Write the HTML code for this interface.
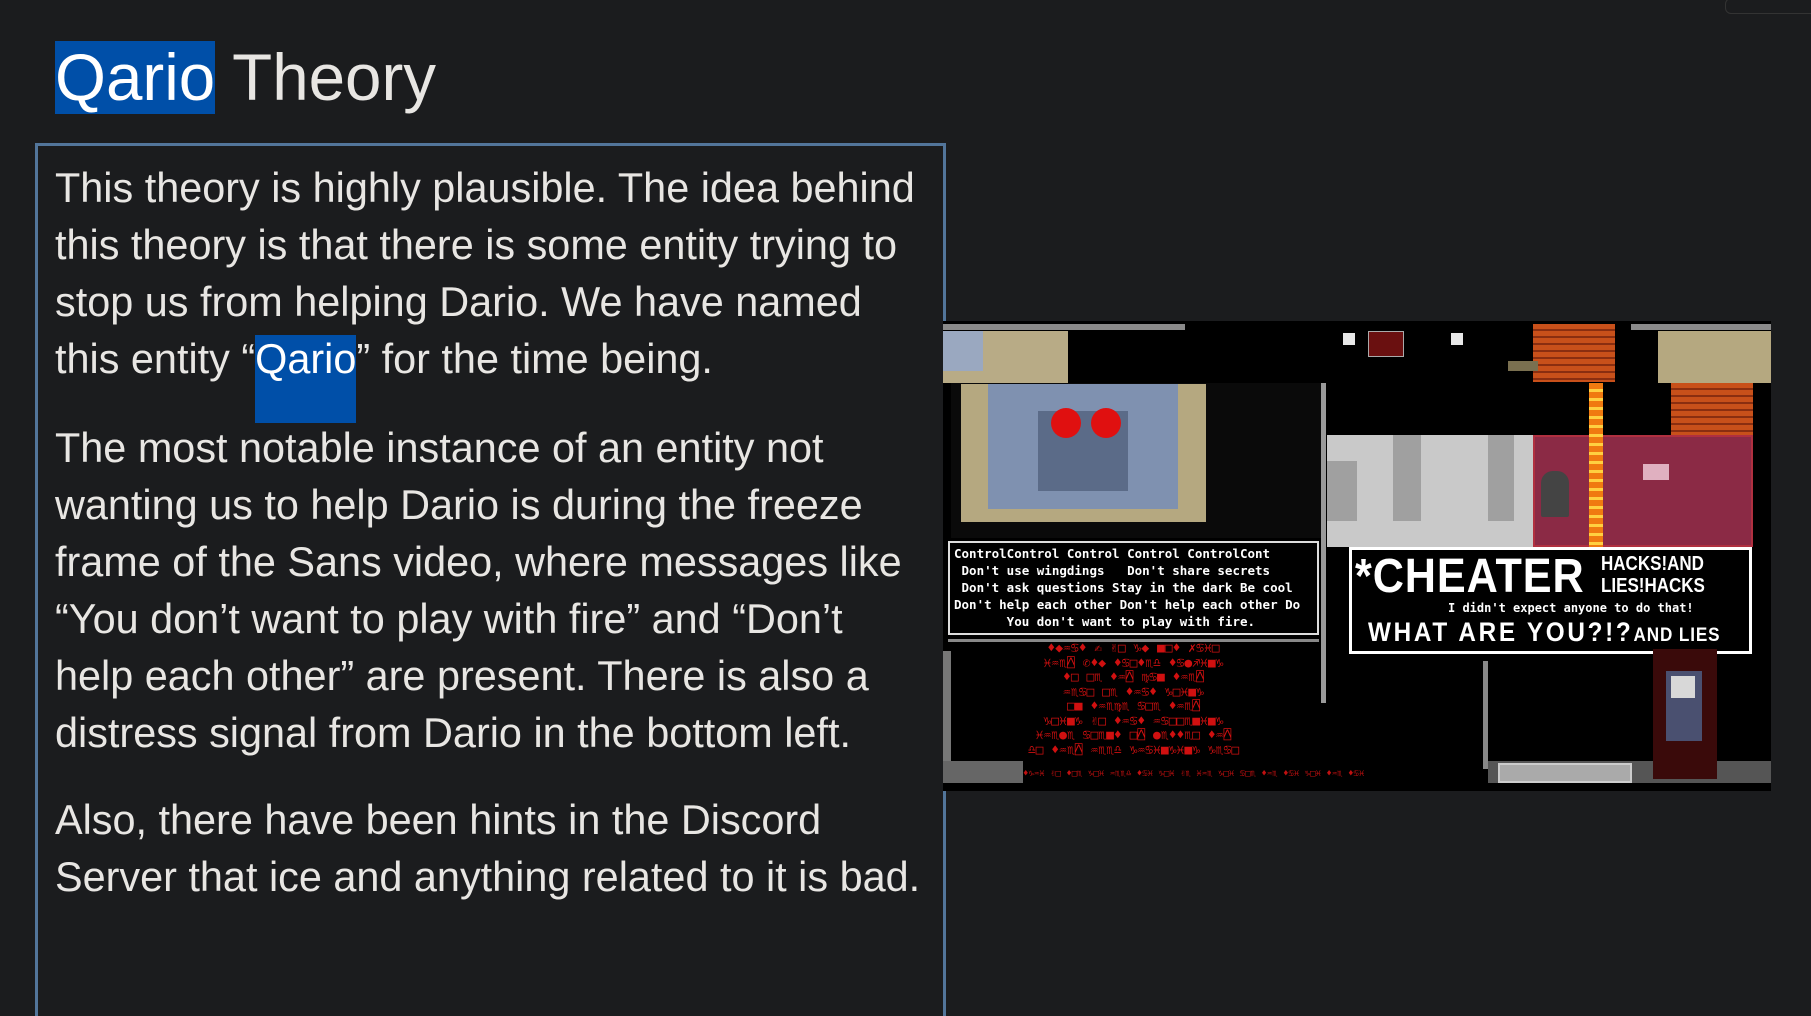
<!DOCTYPE html>
<html><head><meta charset="utf-8"><style>
html,body{margin:0;padding:0;background:#1b1c1e;width:1811px;height:995px;overflow:hidden;font-family:"Liberation Sans",Arial,sans-serif;color:#e8e6e3}
.abs{position:absolute}
h1{position:absolute;left:55px;top:39px;margin:0;font-weight:normal;font-size:65.5px;line-height:78px;white-space:nowrap}
.hl{background:#004fa8;color:#fff}
.box{position:absolute;left:35px;top:143px;width:905px;height:870px;border:3px solid #52759a;border-bottom:none}
.txt{position:absolute;left:55px;top:0;font-size:41.4px;line-height:57px;white-space:nowrap}
.p{position:absolute;left:0}
.img{position:absolute;left:943px;top:321px;width:828px;height:470px;background:#000;overflow:hidden;font-family:"DejaVu Sans Mono","Liberation Mono",monospace}
.img div{position:absolute}
</style></head><body>
<div class="abs" style="left:1725px;top:-2px;width:90px;height:14px;border:1px solid #333;border-radius:6px"></div>
<h1><span class="hl">Qario</span> Theory</h1>
<div class="box"></div>
<div class="abs" style="left:255px;top:335px;width:101px;height:88px;background:#004fa8"></div>
<div class="txt">
<div class="p" style="top:160px">This theory is highly plausible. The idea behind<br>this theory is that there is some entity trying to<br>stop us from helping Dario. We have named<br>this entity “<span style="color:#fff">Qario</span>” for the time being.</div>
<div class="p" style="top:420px">The most notable instance of an entity not<br>wanting us to help Dario is during the freeze<br>frame of the Sans video, where messages like<br>“You don’t want to play with fire” and “Don’t<br>help each other” are present. There is also a<br>distress signal from Dario in the bottom left.</div>
<div class="p" style="top:792px">Also, there have been hints in the Discord<br>Server that ice and anything related to it is bad.</div>
</div>
<div class="img">
  <div style="left:0;top:3px;width:242px;height:6px;background:#8a8a8a"></div>
  <div style="left:0;top:10px;width:125px;height:52px;background:#b8ab86"></div>
  <div style="left:0;top:10px;width:40px;height:40px;background:#9aa8c0"></div>
  <div style="left:8px;top:62px;width:372px;height:155px;background:#0a0a0a"></div>
  <div style="left:18px;top:63px;width:245px;height:138px;background:#b5a880"></div>
  <div style="left:45px;top:63px;width:190px;height:125px;background:#7f91b0"></div>
  <div style="left:95px;top:90px;width:90px;height:80px;background:#5b6b88"></div>
  <div style="left:108px;top:87px;width:30px;height:30px;background:#e01010;border-radius:50%"></div>
  <div style="left:148px;top:87px;width:30px;height:30px;background:#e01010;border-radius:50%"></div>
  <div style="left:378px;top:62px;width:5px;height:320px;background:#9a9a9a"></div>
  <div style="left:5px;top:220px;width:371px;height:94px;background:#000;border:2px solid #ddd;box-sizing:border-box;color:#fff;font-size:12.5px;line-height:17px;padding:2px 4px;white-space:nowrap;font-weight:bold;overflow:hidden">ControlControl Control Control ControlCont<br>&nbsp;Don't use wingdings &nbsp; Don't share secrets<br>&nbsp;Don't ask questions Stay in the dark Be cool<br>Don't help each other Don't help each other Do<br>&nbsp;&nbsp;&nbsp;&nbsp;&nbsp;&nbsp;&nbsp;You don't want to play with fire.</div>
  <div style="left:5px;top:318px;width:371px;height:130px;border-top:3px solid #888;color:#d01010;font-size:13px;line-height:14.5px;text-align:center;white-space:nowrap;overflow:hidden">♦◆♒♋♦ ✍ ✌□ ♑◆ ■□♦ ✗♋♓□<br>♓♒♏⍓ ✆♦◆ ♦♋□♦♏♎ ♦♋●♐♓■♑<br>♦□ □♏ ♦♒⍓ ♍♋■ ♦♒♏⍓<br>♒♏♋□ □♏ ♦♒♋♦ ♑□♓■♑<br>□■ ♦♒♏♍♏ ♋□♏ ♦♒♏⍓<br>♑□♓■♑ ✌□ ♦♒♋♦ ♒♋□□♏■♓■♑<br>♓♒♏●♏ ♋□♏■♦ □⍓ ●♏♦♦♏□ ♦♒⍓<br>♎□ ♦♒♏⍓ ♒♏♏♎ ♑♒♋♓■♑♓■♑ ♑♏♋□</div>
  <div style="left:0;top:330px;width:8px;height:130px;background:#777"></div>
  <div style="left:0;top:440px;width:80px;height:22px;background:#666"></div>
  <div style="left:80px;top:448px;width:460px;height:16px;color:#c01010;font-size:9px;white-space:nowrap;overflow:hidden">♦♑♒♓ ✌□ ♦□♏ ♑□♓ ♒♏♏♎ ♦♋♓ ♑□♓ ✌♏ ♓♒♏ ♑□♓ ♋□♏ ♦♒♏ ♦♋♓ ♑□♓ ♦♒♏ ♦♋♓</div>
  <div style="left:384px;top:114px;width:206px;height:112px;background:#c9c9c9"></div>
  <div style="left:384px;top:140px;width:30px;height:60px;background:#a0a0a0"></div>
  <div style="left:450px;top:114px;width:28px;height:86px;background:#a0a0a0"></div>
  <div style="left:545px;top:114px;width:26px;height:86px;background:#a0a0a0"></div>
  <div style="left:590px;top:114px;width:220px;height:112px;background:#8b2a45;border:2px solid #b03040;box-sizing:border-box"></div>
  <div style="left:590px;top:3px;width:82px;height:58px;background:repeating-linear-gradient(#c8501a 0 5px,#8a2e10 5px 7px)"></div>
  <div style="left:728px;top:62px;width:82px;height:52px;background:repeating-linear-gradient(#c8501a 0 5px,#8a2e10 5px 7px)"></div>
  <div style="left:646px;top:62px;width:14px;height:164px;background:repeating-linear-gradient(#f07a10 0 6px,#ffd040 6px 9px)"></div>
  <div style="left:688px;top:3px;width:140px;height:6px;background:#8a8a8a"></div>
  <div style="left:715px;top:10px;width:113px;height:52px;background:#b5a880"></div>
  <div style="left:400px;top:12px;width:12px;height:12px;background:#e8e8e8"></div>
  <div style="left:508px;top:12px;width:12px;height:12px;background:#e8e8e8"></div>
  <div style="left:565px;top:40px;width:30px;height:10px;background:#7a7050"></div>
  <div style="left:425px;top:10px;width:34px;height:24px;background:#6a1010;border:1px solid #aaa"></div>
  <div style="left:598px;top:150px;width:28px;height:46px;background:#444;border-radius:12px 12px 2px 2px"></div>
  <div style="left:700px;top:143px;width:26px;height:16px;background:#e0b0c0"></div>
  <div style="left:406px;top:226px;width:403px;height:107px;background:#000;border:3px solid #fff;box-sizing:border-box;color:#fff"></div>
  <div style="left:412px;top:228px;font-size:48px;font-weight:bold;color:#fff;font-family:'Liberation Sans Narrow','Liberation Sans',sans-serif;letter-spacing:1px;transform:scaleX(0.9);transform-origin:left">*CHEATER</div>
  <div style="left:658px;top:232px;font-size:20px;font-weight:bold;color:#fff;line-height:22px;font-family:'Liberation Sans Narrow','Liberation Sans',sans-serif;transform:scaleX(0.85);transform-origin:left">HACKS!AND<br>LIES!HACKS</div>
  <div style="left:505px;top:280px;font-size:12px;color:#fff;font-weight:bold">I didn't expect anyone to do that!</div>
  <div style="left:425px;top:296px;font-size:27px;font-weight:bold;color:#fff;font-family:'Liberation Sans Narrow','Liberation Sans',sans-serif;letter-spacing:3px;transform:scaleX(0.9);transform-origin:left">WHAT ARE YOU?!?<span style="font-size:19px;letter-spacing:1px">AND LIES</span></div>
  <div style="left:540px;top:340px;width:5px;height:108px;background:#888"></div>
  <div style="left:545px;top:440px;width:283px;height:22px;background:#555"></div>
  <div style="left:555px;top:442px;width:130px;height:16px;background:#aaa;border:2px solid #ccc"></div>
  <div style="left:710px;top:328px;width:64px;height:130px;background:#3a0a0a"></div>
  <div style="left:723px;top:350px;width:36px;height:70px;background:#4a5070"></div>
  <div style="left:728px;top:355px;width:24px;height:22px;background:#d8d8d8"></div>
</div>
</body></html>
